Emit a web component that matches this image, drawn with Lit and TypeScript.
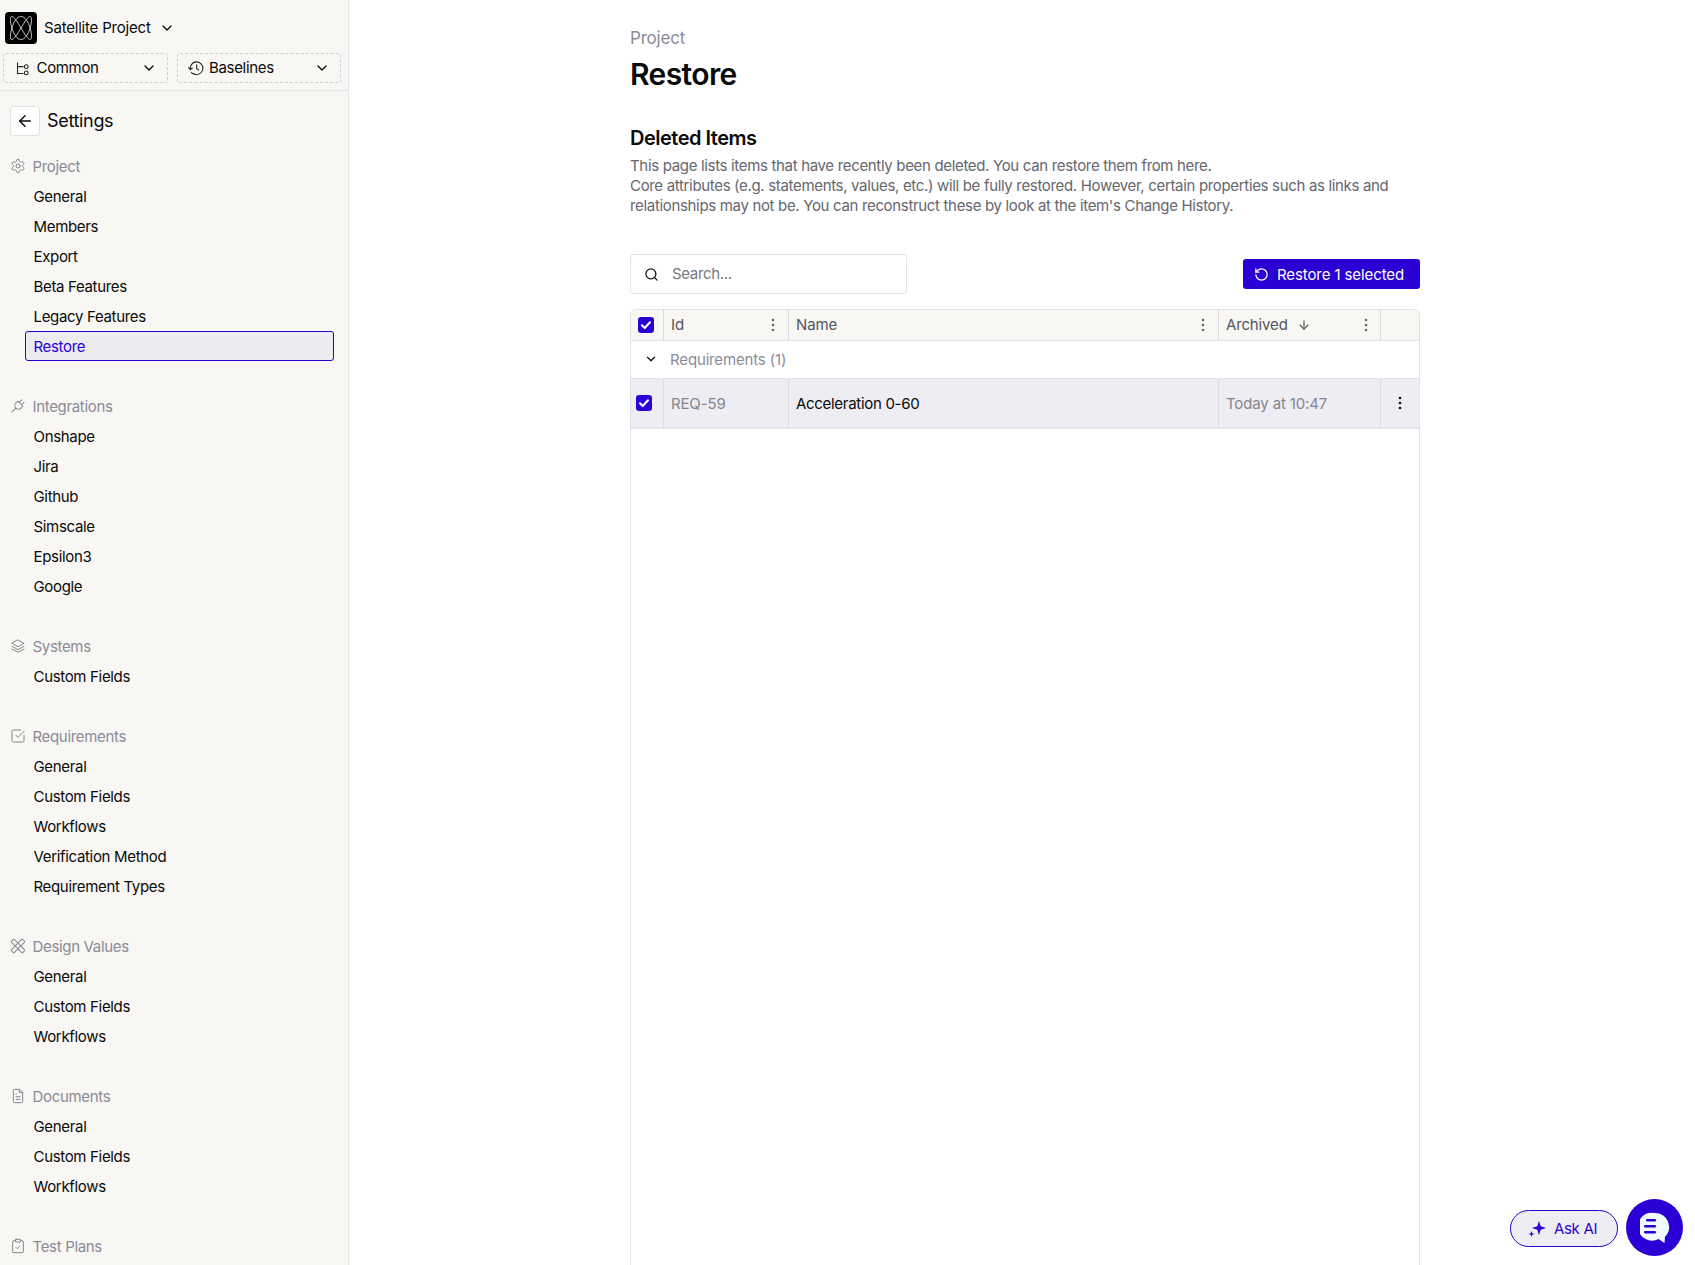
import { LitElement, html, css, svg } from "lit";
import { customElement } from "lit/decorators.js";

const ic = (p: unknown, size = 16, sw = 1.5) => html`<svg class="ic" width=${size} height=${size} viewBox="0 0 24 24" fill="none" stroke="currentColor" stroke-width=${sw} stroke-linecap="round" stroke-linejoin="round">${p}</svg>`;

const P = {
  gear: svg`<path d="M12.22 2h-.44a2 2 0 0 0-2 2v.18a2 2 0 0 1-1 1.73l-.43.25a2 2 0 0 1-2 0l-.15-.08a2 2 0 0 0-2.73.73l-.22.38a2 2 0 0 0 .73 2.73l.15.1a2 2 0 0 1 1 1.72v.51a2 2 0 0 1-1 1.74l-.15.09a2 2 0 0 0-.73 2.73l.22.38a2 2 0 0 0 2.73.73l.15-.08a2 2 0 0 1 2 0l.43.25a2 2 0 0 1 1 1.73V20a2 2 0 0 0 2 2h.44a2 2 0 0 0 2-2v-.18a2 2 0 0 1 1-1.73l.43-.25a2 2 0 0 1 2 0l.15.08a2 2 0 0 0 2.73-.73l.22-.39a2 2 0 0 0-.73-2.73l-.15-.08a2 2 0 0 1-1-1.74v-.5a2 2 0 0 1 1-1.74l.15-.09a2 2 0 0 0 .73-2.73l-.22-.38a2 2 0 0 0-2.73-.73l-.15.08a2 2 0 0 1-2 0l-.43-.25a2 2 0 0 1-1-1.73V4a2 2 0 0 0-2-2z"/><circle cx="12" cy="12" r="3"/>`,
  plug: svg`<g transform="rotate(45 12 12)"><path d="M6.500 7h11v4a5.500 5.500 0 0 1-11 0z"/><path d="M9.500 1.500V7"/><path d="M14.500 1.500V7"/><path d="M12 16.500V25"/></g>`,
  layers: svg`<path d="M12 3l9 5-9 5-9-5z"/><path d="M3 12.500l9 5 9-5"/><path d="M3 16.500l9 5 9-5"/>`,
  check: svg`<path d="M21 10.500V19a2 2 0 0 1-2 2H5a2 2 0 0 1-2-2V5a2 2 0 0 1 2-2h11"/><path d="M9 11l3 3L21 5"/>`,
  ruler: svg`<rect x="9" y="0" width="6" height="24" rx="1.500" transform="rotate(45 12 12)"/><rect x="9" y="0" width="6" height="24" rx="1.500" transform="rotate(-45 12 12)"/>`,
  file: svg`<path d="M14 2H7a2 2 0 0 0-2 2v16a2 2 0 0 0 2 2h10a2 2 0 0 0 2-2V7z"/><path d="M14 2v5h5"/><path d="M9 9h1"/><path d="M9 13h6"/><path d="M9 17h6"/>`,
  clip: svg`<rect x="8" y="2" width="8" height="4" rx="1"/><path d="M16 4h2a2 2 0 0 1 2 2v14a2 2 0 0 1-2 2H6a2 2 0 0 1-2-2V6a2 2 0 0 1 2-2h2"/><path d="M9 14l2 2 4-4"/>`,
  chev: svg`<path d="M6 9l6 6 6-6"/>`,
  arrowL: svg`<path d="M19 12H5"/><path d="M12 19l-7-7 7-7"/>`,
  arrowD: svg`<path d="M12 5v14"/><path d="M19 12l-7 7-7-7"/>`,
  search: svg`<circle cx="11" cy="11" r="8"/><path d="M21 21l-4.300-4.300"/>`,
  undo: svg`<path d="M3 12a9 9 0 1 0 9-9 9.750 9.750 0 0 0-6.740 2.740L3 8"/><path d="M3 3v5h5"/>`,
  branch: svg`<path d="M4 3v17h9"/><path d="M4 9h9"/><circle cx="18" cy="9" r="3"/><circle cx="18" cy="19" r="3"/>`,
  hist: svg`<path d="M3.500 14a9.500 9.500 0 1 1 5.500 7"/><path d="M13 7v6l3 2"/><path d="M1 11l2.500 3.500L6.500 12"/><path d="M5 19l4 2"/>`,
};

const lissajous = () => {
  const pts: string[] = [];
  for (let i = 0; i <= 240; i++) {
    const t = (i / 240) * Math.PI * 2;
    const x = 16 + 10.5 * Math.sin(2 * t);
    const y = 16 + 11.5 * Math.sin(3 * t);
    pts.push(`${x.toFixed(2)},${y.toFixed(2)}`);
  }
  return pts.join(" ");
};

const dots = html`<svg class="dots" width="4" height="14" viewBox="0 0 4 14"><circle cx="2" cy="2" r="1.300"/><circle cx="2" cy="7" r="1.300"/><circle cx="2" cy="12" r="1.300"/></svg>`;
const box = html`<span class="cb"><svg width="12" height="12" viewBox="0 0 12 12" fill="none" stroke="#fff" stroke-width="2" stroke-linecap="round" stroke-linejoin="round"><path d="M2 6.300l2.700 2.700L10 3.300"/></svg></span>`;

const GROUPS: [string, unknown, string[]][] = [
  ["Project", P.gear, ["General", "Members", "Export", "Beta Features", "Legacy Features", "Restore"]],
  ["Integrations", P.plug, ["Onshape", "Jira", "Github", "Simscale", "Epsilon3", "Google"]],
  ["Systems", P.layers, ["Custom Fields"]],
  ["Requirements", P.check, ["General", "Custom Fields", "Workflows", "Verification Method", "Requirement Types"]],
  ["Design Values", P.ruler, ["General", "Custom Fields", "Workflows"]],
  ["Documents", P.file, ["General", "Custom Fields", "Workflows"]],
  ["Test Plans", P.clip, []],
];

@customElement("app-root")
export class AppRoot extends LitElement {
  static styles = css`
    :host { display: flex; width: 1695px; height: 1265px; overflow: hidden; position: relative; background: #fff;
      font-family: Inter, "Liberation Sans", sans-serif; font-size: 15px; color: #0a0a0a; letter-spacing: -0.33px; }
    .ic { display: block; flex: none; }
    .side { width: 349px; flex: none; box-sizing: border-box; background: #f8f7f4; border-right: 1px solid #e6e5ea; overflow: hidden; }
    .top { height: 91px; box-sizing: border-box; border-bottom: 1px solid #e4e3e8; padding: 12px 7px 0 3px; }
    .proj { display: flex; align-items: center; height: 32px; padding-left: 2px; }
    .proj span { padding-bottom: 1px; letter-spacing: -0.2px; }
    .logo { width: 32px; height: 32px; border-radius: 4px; background: #000; flex: none; margin-right: 7px; }
    .proj .ic { margin-left: 8px; }
    .pills { display: flex; gap: 9px; margin-top: 9px; }
    .pill { flex: 1; height: 30px; box-sizing: border-box; border: 1px dashed #cfced3; border-radius: 3px; display: flex; align-items: center; padding: 0 10px 0 11px; }
    .pill.hist { padding-left: 10px; }
    .pill span { margin-left: 6.500px; flex: 1; padding-bottom: 2px; }
    .pill.hist span { margin-left: 5px; }
    .pill .ic:first-child { color: #222; }
    .title { display: flex; align-items: center; gap: 7px; margin: 15px 0 0 10px; height: 30px; font-size: 18px; }
    .title span { padding-bottom: 1px; }
    .back { width: 30px; height: 30px; box-sizing: border-box; background: #fff; border: 1px solid #e2e1e6; border-radius: 3px; display: grid; place-items: center; }
    .nav { margin-top: 15px; }
    .grp { margin-bottom: 30px; }
    .hd { height: 30px; display: flex; align-items: center; gap: 6.500px; padding-left: 10px; color: #8b8b97; }
    .hd .ic { color: #85858f; }
    .it { height: 30px; margin: 0 14px 0 25px; padding-left: 8.500px; box-sizing: border-box; display: flex; align-items: center; }
    .it.on { border: 1px solid #2b00d4; border-radius: 3px; background: #ecebf0; color: #2b00d4; padding-left: 7.500px; }
    .main { flex: 1; min-width: 0; padding: 0 0 0 282px; display: flex; flex-direction: column; }
    .wrap { width: 790px; flex: 1; display: flex; flex-direction: column; min-height: 0; margin-left: -1px; }
    .crumb { margin-top: 28px; height: 20px; line-height: 20px; font-size: 17px; color: #8b8b97; letter-spacing: -0.2px; }
    h1 { margin: 7px 0 0; font-size: 30px; line-height: 38px; font-weight: 600; letter-spacing: -0.6px; }
    h2 { margin: 31px 0 0; font-size: 20px; line-height: 28px; font-weight: 600; letter-spacing: -0.5px; }
    .desc { margin: 4px 0 0; font-size: 15px; line-height: 20px; color: #66666e; letter-spacing: -0.33px; }
    .bar { display: flex; justify-content: space-between; align-items: center; margin-top: 38px; height: 40px; }
    .search { width: 277px; height: 40px; box-sizing: border-box; border: 1px solid #e4e3e8; border-radius: 3px; display: flex; align-items: center; padding-left: 13px; gap: 13px; color: #77777f; }
    .search .ic { color: #111; }
    .search span { padding-bottom: 1px; }
    .btn { height: 30px; width: 177px; box-sizing: border-box; background: #2b00d4; color: #fff; border-radius: 3px; display: flex; align-items: center; padding-left: 11px; gap: 8px; letter-spacing: -0.1px; }
    .table { margin-top: 15px; flex: 1; border: 1px solid #e4e3e8; border-bottom: 0; border-radius: 6px 6px 0 0; overflow: hidden; letter-spacing: -0.15px; }
    .row { display: grid; grid-template-columns: 32px 125px 430px 162px 1fr; }
    .row > div { display: flex; align-items: center; box-sizing: border-box; padding-left: 7px; }
    .row > div + div { border-left: 1px solid #dcdbe0; }
    .head { height: 30px; background: #f8f7f4; border-bottom: 1px solid #e4e3e8; color: #55555c; }
    .head > div { justify-content: space-between; padding-right: 12px; padding-bottom: 1px; }
    .head > div:nth-child(2) { padding-right: 13px; }
    .head > div:nth-child(3) { padding-right: 13px; }
    .head .arch { display: flex; align-items: center; gap: 9px; }
    .dots { fill: #66666e; display: block; flex: none; }
    .grouprow { height: 38px; display: flex; align-items: center; color: #8b8b97; padding: 0 0 1px 13px; gap: 12px; border-bottom: 1px solid #e4e3e8; box-sizing: border-box; }
    .grouprow .ic { color: #111; }
    .sel { height: 48px; background: #efedf4; border-bottom: 2px solid #e4e3e8; }
    .sel .muted { color: #85858f; }
    .sel .dots { fill: #111; }
    .sel .name { letter-spacing: -0.3px; }
    .sel > div.cell-box { padding-left: 5px; }
    .row > div.cell-more { padding-left: 17px; }
    .cb { width: 16px; height: 16px; border-radius: 3px; background: #2b00d4; display: grid; place-items: center; flex: none; }
    .ask { position: absolute; left: 1510px; top: 1210px; width: 108px; height: 37px; box-sizing: border-box; border: 1px solid #2b00d4; border-radius: 19px; background: #efedf4; color: #2b00d4; display: flex; align-items: center; padding-left: 17px; gap: 8px; }
    .chat { position: absolute; left: 1626px; top: 1199px; width: 57px; height: 57px; border-radius: 50%; background: #2b00d4; display: grid; place-items: center; }
  `;

  render() {
    return html`
      <aside class="side">
        <div class="top">
          <div class="proj">
            <svg class="logo" viewBox="0 0 32 32" fill="none" stroke="#dcdcdc" stroke-width="1"><polyline points=${lissajous()} /></svg>
            <span>Satellite Project</span>${ic(P.chev, 16, 2)}
          </div>
          <div class="pills">
            <div class="pill">${ic(P.branch, 15, 1.7)}<span>Common</span>${ic(P.chev, 16, 2)}</div>
            <div class="pill hist">${ic(P.hist, 16, 1.6)}<span>Baselines</span>${ic(P.chev, 16, 2)}</div>
          </div>
        </div>
        <div class="title"><div class="back">${ic(P.arrowL, 18, 2)}</div><span>Settings</span></div>
        <nav class="nav">
          ${GROUPS.map(([n, i, items]) => html`<div class="grp">
            <div class="hd">${ic(i)}${n}</div>
            ${items.map((t) => html`<div class="it ${t === "Restore" ? "on" : ""}">${t}</div>`)}
          </div>`)}
        </nav>
      </aside>
      <main class="main">
        <div class="wrap">
          <div class="crumb">Project</div>
          <h1>Restore</h1>
          <h2>Deleted Items</h2>
          <div class="desc">This page lists items that have recently been deleted. You can restore them from here.<br />Core attributes (e.g. statements, values, etc.) will be fully restored. However, certain properties such as links and<br />relationships may not be. You can reconstruct these by look at the item's Change History.</div>
          <div class="bar">
            <div class="search">${ic(P.search, 15, 2)}<span>Search...</span></div>
            <div class="btn">${ic(P.undo, 15, 2)}Restore 1 selected</div>
          </div>
          <div class="table">
            <div class="row head">
              <div class="cell-box">${box}</div>
              <div>Id ${dots}</div>
              <div>Name ${dots}</div>
              <div><span class="arch">Archived ${ic(P.arrowD, 14, 2)}</span> ${dots}</div>
              <div></div>
            </div>
            <div class="grouprow">${ic(P.chev, 14, 2.2)}Requirements (1)</div>
            <div class="row sel">
              <div class="cell-box">${box}</div>
              <div class="muted">REQ-59</div>
              <div class="name">Acceleration 0-60</div>
              <div class="muted">Today at 10:47</div>
              <div class="cell-more">${dots}</div>
            </div>
          </div>
        </div>
      </main>
      <div class="ask">
        <svg width="18" height="18" viewBox="0 0 18 18" fill="#2b00d4"><path d="M11 1l1.700 5.300L18 8l-5.300 1.700L11 15 9.300 9.700 4 8l5.300-1.700z"/><path d="M3.500 11l.8 2.200 2.200.8-2.200.8-.8 2.200-.8-2.200L.5 14l2.200-.8z"/></svg>
        Ask AI
      </div>
      <div class="chat">
        <svg width="30" height="32" viewBox="0 0 30 32"><path d="M15 1a14 14 0 0 1 10 23.800L24.500 31 18.500 27A14 14 0 1 1 15 1z" fill="#f2fbff"/><rect x="6" y="7" width="10" height="2.400" rx="1.200" fill="#2b00d4"/><rect x="4" y="13" width="12" height="2.400" rx="1.200" fill="#2b00d4"/><rect x="4" y="19" width="12" height="2.400" rx="1.200" fill="#2b00d4"/></svg>
      </div>
    `;
  }
}
